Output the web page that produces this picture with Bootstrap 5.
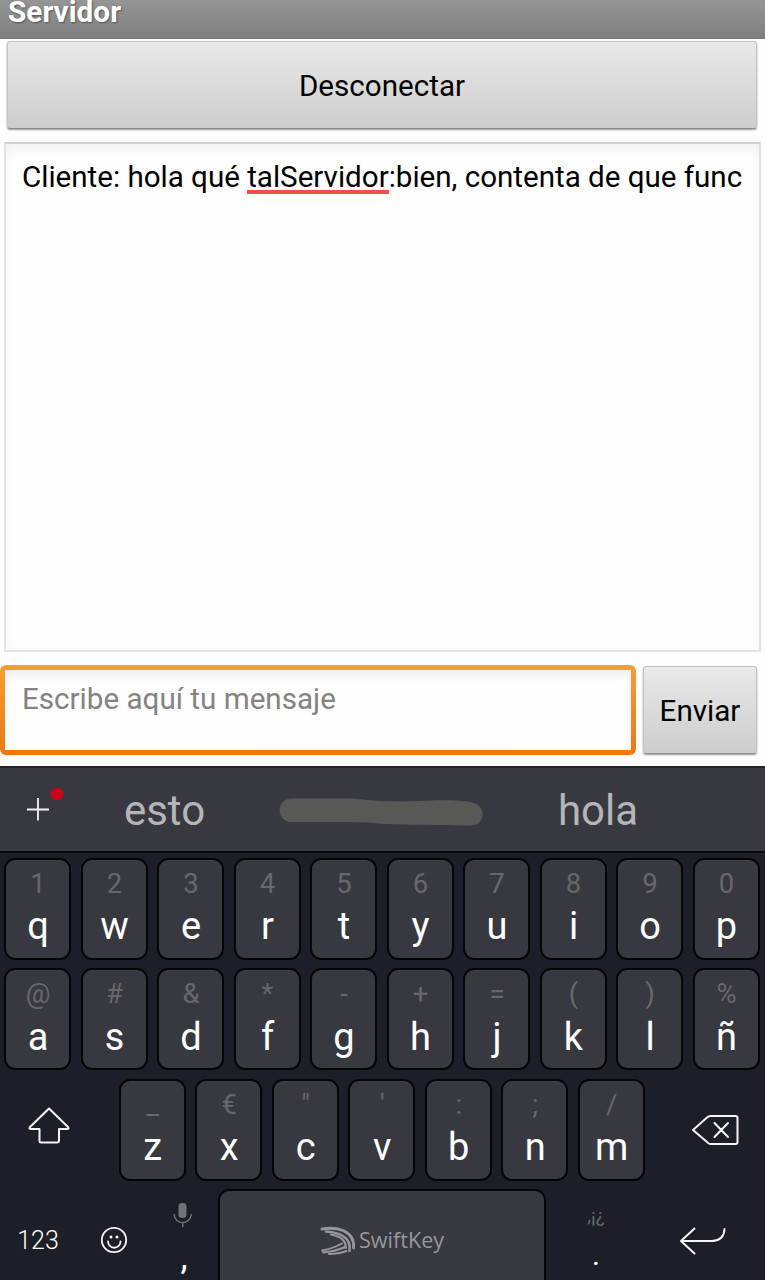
<!DOCTYPE html>
<html lang="es">
<head>
<meta charset="utf-8">
<meta name="viewport" content="width=device-width, initial-scale=1">
<title>Servidor</title>
<link href="https://cdn.jsdelivr.net/npm/bootstrap@5.3.0/dist/css/bootstrap.min.css" rel="stylesheet">
<style>
  body { font-family: Roboto, "Liberation Sans", sans-serif; font-size: 29.6px; background: #fefefe; color: #000; height: 1280px; overflow: hidden; }
  .titlebar { height: 38.5px; padding-left: 8px; background: linear-gradient(#959595, #7f7f7f); border-bottom: 1px solid #777; color: #fff; font-size: 29.8px; font-weight: 700; line-height: 24px; text-shadow: 1px 1px 2px #555; }
  .gray-btn { border: 1px solid #c4c4c4; border-bottom-color: #8b8b8b; border-radius: 3px; color: #000; font-size: 29.6px; padding: 3px 0 0; background: linear-gradient(#e9e9e9, #cdcdcd); box-shadow: 0 1px 2px #0006; }
  .connect { height: 88px; margin: 2px 8px 0 7px; }
  .log { height: 510px; margin: 13px 4px 0 4px; padding: 16px 16px; border: 2px solid #e2e2e2; border-top-color: #d2d2d2; box-shadow: inset 0 5px 12px #0000000d; line-height: 35px; letter-spacing: -.02px; white-space: nowrap; overflow: hidden; }
  .misspelt { border-bottom: 4px solid #f05048; display: inline-block; height: 34px; line-height: 35px; vertical-align: top; }
  .compose { height: 90px; margin-top: 13px; }
  .field { width: 636px; border-radius: 6px; padding: 5px; background: linear-gradient(#f79d35, #e97a12); }
  .field input { font-size: 29.6px; border: 0; border-radius: 0; padding: 0 17px 21px; background: #fefefe; box-shadow: inset 0 5px 10px #00000012; height: 100%; }
  .field input::placeholder { color: #838383; }
  .send { width: 114px; height: 88px; margin: 1px 0 0 7px; }
  .keyboard { margin-top: 11px; height: 514px; background: #1c1f28; color: #fff; }
  .suggest { height: 87px; background: #383840; border-top: 2px solid #22262b; border-bottom: 2px solid #07090c; color: #b5b5b9; font-size: 42px; line-height: 85px; }
  .suggest svg, .key-row svg { display: block; flex: none; }
  .key-row { height: 110.5px; padding-top: 5px; }
  .cell { width: 76.5px; padding: 0 5.5px 0 4px; }
  .keycap { height: 102px; border: 2px solid #030507; border-radius: 11px; background: #383840; padding: 9px 0 0 1px; box-shadow: inset 0 1px #3e3e46; }
  .hint { font-size: 27.5px; font-weight: 400; line-height: 30px; color: #68686c; }
  .letter { font-size: 38px; line-height: 44px; margin-top: 5.5px; }
  .side { width: 114.75px; }
  .spacebar { width: 328px; height: 110px; border-radius: 11px; border: 2px solid #030507; background: #383840; color: #97979b; font-size: 21.6px; line-height: 98px; }
</style>
</head>
<body>
<header class="titlebar">Servidor</header>
<main>
  <div class="d-flex"><button class="btn gray-btn connect flex-grow-1">Desconectar</button></div>
  <div class="log">Cliente: hola qué <span class="misspelt">talServidor</span>:bien, contenta de que func</div>
  <div class="compose d-flex">
    <div class="field"><input class="form-control" type="text" placeholder="Escribe aquí tu mensaje"></div>
    <button class="btn gray-btn send">Enviar</button>
  </div>
</main>
<section class="keyboard">
  <div class="suggest d-flex text-center">
    <svg width="76" height="83" viewBox="0 0 76 83"><path d="M27 41.500H49M38 30V52.500" stroke="#f2f2f4" stroke-width="1.800"/><circle cx="57" cy="26" r="6.300" fill="#cb0418"/></svg>
    <div style="width:177px">esto</div>
    <svg width="256" height="83" viewBox="0 0 256 83"><path d="M37 30.500H101C120 33 145 34 165 33C185 32 200 32 215 33.500C234 35 234 57 218 57.500C170 57 150 57 125 55.500Q115 54 94 54H37A11.500 11.800 0 0 1 37 30.500" fill="#585955"/></svg>
    <div style="width:178px">hola</div>
  </div>
  <div class="key-row d-flex text-center" data-keys="1q 2w 3e 4r 5t 6y 7u 8i 9o 0p"></div>
  <div class="key-row d-flex text-center" data-keys="@a #s &amp;d *f -g +h =j (k )l %ñ"></div>
  <div class="key-row d-flex">
    <div class="side"><svg width="114" height="102" viewBox="0 0 114 102"><path d="M49 29.500L30 48Q28.500 50 31 50H39.500V62Q39.500 63.500 41 63.500H57Q59 63.500 59 61.500V50H67Q69.500 50 68 48Z" fill="none" stroke="#f5f5f7" stroke-width="2" stroke-linejoin="round"/></svg></div>
    <div class="d-flex text-center" data-keys="_z €x &quot;c 'v :b ;n /m"></div>
    <div class="side"><svg width="114" height="102" viewBox="0 0 114 102"><path d="M60.500 37H85.500Q87.500 37 87.500 39V63Q87.500 65 85.500 65H60.500Q58.500 65 57 63L43 51L57 38.500Q58.500 37 60.500 37M64.500 44L78 58M78 44L64.500 58" fill="none" stroke="#f5f5f7" stroke-width="2" stroke-linejoin="round" stroke-linecap="round"/></svg></div>
  </div>
  <div class="key-row d-flex text-center overflow-hidden">
    <div style="width:76px;font-size:25px;font-weight:300;line-height:104px">123</div>
    <svg width="76" height="100" viewBox="0 0 76 100"><g fill="none" stroke="#f5f5f7" stroke-width="1.800"><circle cx="38" cy="51" r="12.200"/><path d="M32 52.500A6.200 6.200 0 0 0 44.500 52.500" stroke-linecap="round"/></g><circle cx="35" cy="48" r="1.500" fill="#fff"/><circle cx="41" cy="48" r="1.500" fill="#fff"/></svg>
    <div style="width:66px">
      <svg width="64" height="48" viewBox="0 0 64 48"><rect x="26.500" y="14" width="8" height="15" rx="3.500" fill="#737377"/><path d="M22 25C23 36.500 38 36.500 39.500 25M30.800 33.500V38" fill="none" stroke="#737377" stroke-width="1.400"/></svg>
      <div style="font-size:36px;line-height:38px;margin:1px 0 0 -2px">,</div>
    </div>
    <div class="spacebar d-flex justify-content-center">
      <svg width="39" height="98" viewBox="0 0 39 98" fill="none" stroke="#97979b" stroke-linecap="round">
        <path d="M2 38Q14 36 23 39.500Q35 45 33.500 57" stroke-width="2.800"/>
        <path d="M6 40.500Q16 41 23 45Q31 50 29.500 60" stroke-width="2.500"/>
        <path d="M11 43.500Q26 46 25.800 57" stroke-width="2.200"/>
        <path d="M2 59.500Q13 57.500 22 52.500M3 61.500Q15 60.500 25 56M9 63Q18 63.500 26.500 60" stroke-width="2"/>
      </svg>
      <span style="font-family:'Open Sans',sans-serif">SwiftKey</span>
    </div>
    <div style="width:100px">
      <div class="hint" style="font-size:19px;margin-top:12px">,¡¿</div>
      <div style="font-size:30px;line-height:34px;margin-top:7px">.</div>
    </div>
    <svg width="119" height="100" viewBox="0 0 119 100"><path d="M48.500 39.500L35 52L48.500 64.500M35 52H66Q78 51.500 78.500 40" fill="none" stroke="#f5f5f7" stroke-width="2" stroke-linecap="round" stroke-linejoin="round"/></svg>
  </div>
</section>
<script src="https://cdn.jsdelivr.net/npm/bootstrap@5.3.0/dist/js/bootstrap.bundle.min.js"></script>
<script>
  // Each pair is the long-press symbol followed by the key's letter.
  document.querySelectorAll('[data-keys]').forEach(function (row) {
    row.dataset.keys.split(' ').forEach(function (pair) {
      var cell = document.createElement('div');
      cell.className = 'cell';
      cell.innerHTML = '<div class="keycap"><div class="hint"></div><div class="letter"></div></div>';
      cell.querySelector('.hint').textContent = pair[0];
      cell.querySelector('.letter').textContent = pair[1];
      row.appendChild(cell);
    });
  });
</script>
</body>
</html>
